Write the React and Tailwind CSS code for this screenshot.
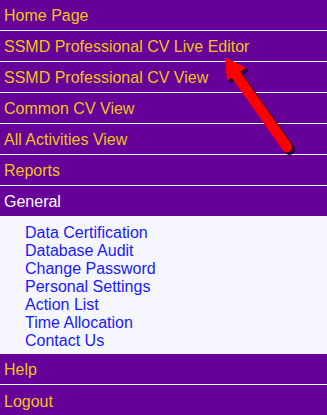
import React from "react";

const top = [
  "Home Page",
  "SSMD Professional CV Live Editor",
  "SSMD Professional CV View",
  "Common CV View",
  "All Activities View",
  "Reports",
];
const subs = [
  "Data Certification",
  "Database Audit",
  "Change Password",
  "Personal Settings",
  "Action List",
  "Time Allocation",
  "Contact Us",
];

function Row({ label, white, border = true }) {
  return (
    <div
      className={`h-[31px] bg-[#660099] pl-[4px] pt-[2px] flex items-center ${border ? "border-b border-white" : ""} ${white ? "text-white" : "text-[#f0c419]"}`}
    >
      <span className="text-[16px] leading-[18px]">{label}</span>
    </div>
  );
}

export default function App() {
  return (
    <div
      className="relative w-[327px] h-[415px] overflow-hidden bg-[#660099]"
      style={{ fontFamily: '"Liberation Sans", Arial, sans-serif' }}
    >
      {top.map((t) => (
        <Row key={t} label={t} />
      ))}
      <div className="h-[30px] bg-[#660099] pl-[4px] pt-[2px] flex items-center text-white">
        <span className="text-[16px] leading-[18px]">General</span>
      </div>
      <div className="bg-[#f5f6ff] pl-[25px] pt-[8px] pb-[4px] h-[138px]">
        {subs.map((s) => (
          <div key={s} className="text-[16px] leading-[18px] text-[#1a1aff]">
            {s}
          </div>
        ))}
      </div>
      <Row label="Help" />
      <Row label="Logout" border={false} />

      <svg
        className="absolute left-0 top-0 pointer-events-none"
        width="327"
        height="415"
        viewBox="0 0 327 415"
      >
        <g transform="translate(2.5,2.5)" fill="#1a0022" stroke="#1a0022" opacity="0.85">
          <line x1="234" y1="72" x2="287" y2="147" strokeWidth="11" strokeLinecap="round" />
          <polygon points="226,59 228,79 244,68" strokeWidth="3" strokeLinejoin="round" />
        </g>
        <g fill="#ff0000" stroke="#ff0000">
          <line x1="234" y1="72" x2="287" y2="147" strokeWidth="10.5" strokeLinecap="round" />
          <polygon points="226,59 228,79 244,68" strokeWidth="2" strokeLinejoin="round" />
        </g>
      </svg>
    </div>
  );
}
